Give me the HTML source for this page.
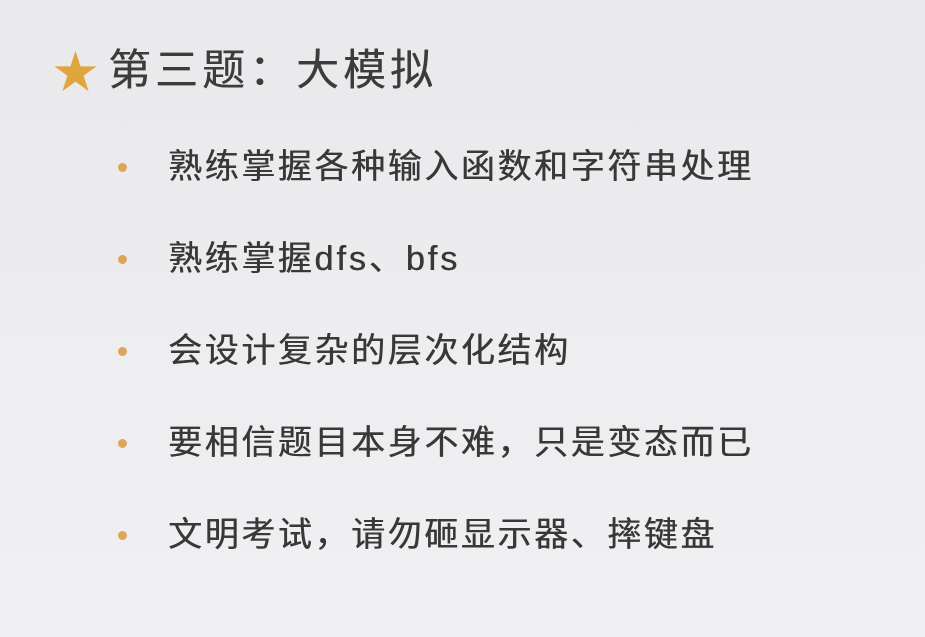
<!DOCTYPE html>
<html><head><meta charset="utf-8"><style>
html,body{margin:0;padding:0;}
body{width:925px;height:637px;overflow:hidden;background:linear-gradient(180deg,#e9e9eb 0%,#eeeef0 60%,#f0f0f2 100%);font-family:"Liberation Sans","Noto Sans CJK SC",sans-serif;color:#3a3a3a;position:relative;}
.star{position:absolute;left:53px;top:50px;color:#e0a53c;font-size:45px;line-height:46px;}
.title{position:absolute;left:108px;top:46px;font-size:43px;line-height:50px;letter-spacing:4px;color:#3c3c3c;text-shadow:0.4px 0 0 #3c3c3c;}
.item{position:absolute;left:168px;font-size:34px;line-height:40px;letter-spacing:2.6px;color:#383838;text-shadow:0.5px 0 0 #383838;}
.dot{position:absolute;left:118px;width:9px;height:9px;border-radius:50%;background:#dba65a;}
</style></head><body>
<div class="star">★</div>
<div class="title">第三题：大模拟</div>
<div class="dot" style="top:163px"></div><div class="item" style="top:147px">熟练掌握各种输入函数和字符串处理</div>
<div class="dot" style="top:255px"></div><div class="item" style="top:239px">熟练掌握<span style="letter-spacing:3px">dfs、bfs</span></div>
<div class="dot" style="top:347px"></div><div class="item" style="top:331px">会设计复杂的层次化结构</div>
<div class="dot" style="top:439px"></div><div class="item" style="top:423px">要相信题目本身不难，只是变态而已</div>
<div class="dot" style="top:531px"></div><div class="item" style="top:515px">文明考试，请勿砸显示器、摔键盘</div>
</body></html>
